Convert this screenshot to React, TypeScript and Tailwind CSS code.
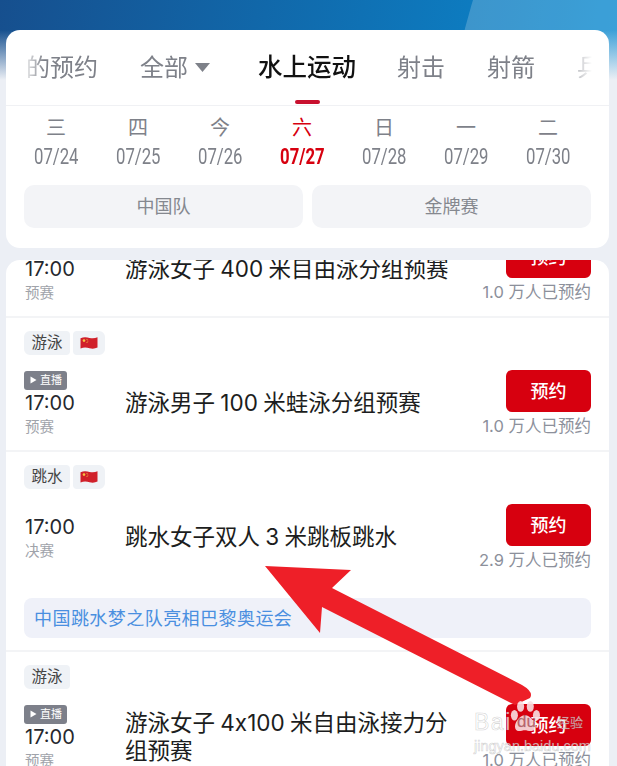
const CJK = "font-['Inter','Noto_Sans_CJK_SC',sans-serif]"

const DAYS = [
  { w: '三', d: '07/24' },
  { w: '四', d: '07/25' },
  { w: '今', d: '07/26' },
  { w: '六', d: '07/27', active: true },
  { w: '日', d: '07/28' },
  { w: '一', d: '07/29' },
  { w: '二', d: '07/30' },
]

function Flag() {
  return (
    <svg width="18" height="14" viewBox="0 0 18 14">
      <path d="M0.5 2.2C4 0.6 7 1.2 9.5 1.9C12.5 2.6 15 2.4 17.5 1.2V11.6C15 12.8 12.5 13 9.5 12.3C7 11.6 4 11 0.5 12.6Z" fill="#d0202a" />
      <circle cx="4" cy="4.6" r="1.3" fill="#f5c542" />
      <circle cx="7" cy="3.4" r="0.5" fill="#f5c542" />
      <circle cx="7.8" cy="5" r="0.5" fill="#f5c542" />
      <circle cx="7" cy="6.6" r="0.5" fill="#f5c542" />
    </svg>
  )
}

function Tags({ name, flag }: { name: string; flag?: boolean }) {
  return (
    <div className="flex gap-[3px] h-6">
      <span className="w-[46px] h-6 flex items-center justify-center rounded-l-md rounded-r-sm bg-[#eff2f6] text-[15.5px] text-[#444]">
        {name}
      </span>
      {flag && (
        <span className="w-8 h-6 flex items-center justify-center rounded-r-md rounded-l-sm bg-[#eff2f6]">
          <Flag />
        </span>
      )}
    </div>
  )
}

function LiveBadge() {
  return (
    <span className="-ml-px w-[43px] h-[19px] flex items-center gap-[3px] pl-[6px] rounded-[3px] bg-[#7d808a] text-[11px] text-white">
      <svg width="7" height="8" viewBox="0 0 7 8">
        <path d="M0.5 0.5L6.5 4L0.5 7.5Z" fill="#fff" />
      </svg>
      直播
    </span>
  )
}

interface RowProps {
  sport: string
  flag?: boolean
  live?: boolean
  stage: string
  title: string
  count: string
  children?: React.ReactNode
}

function Row({ sport, flag, live, stage, title, count, children }: RowProps) {
  return (
    <div className="shrink-0 px-[18px] pt-[13px] pb-3 border-b-2 border-[#f3f4f6]">
      <Tags name={sport} flag={flag} />
      <div className="mt-[15px] h-[68px] flex items-center">
        <div className="w-[101px] pl-px shrink-0 flex flex-col items-start">
          {live && <LiveBadge />}
          <span className="text-[20px] leading-[26px] text-[#26282e]">17:00</span>
          <span className="text-[14.5px] leading-[22px] text-[#a0a3aa]">{stage}</span>
        </div>
        <div className="flex-1 -mt-[2px] text-[22.5px] leading-[28px] [word-spacing:-1px] text-[#1c1d20] pr-2">{title}</div>
        <div className="w-[115px] shrink-0 flex flex-col items-end">
          <button className="w-[85px] h-[42px] rounded-md bg-[#d7000f] text-white text-[18px] font-medium">预约</button>
          <span className="mt-[2px] text-[16.5px] leading-[24px] text-[#8c909b] whitespace-nowrap">{count}</span>
        </div>
      </div>
      {children}
    </div>
  )
}

function Arrow() {
  return (
    <svg className="absolute left-0 top-0" width="617" height="766" viewBox="0 0 617 766">
      <path
        d="M265 566L351 570L332 588L522 685Q534 692 530 698L515 705L322 607L320 633Z"
        fill="#ee1f28"
      />
    </svg>
  )
}

function Watermark() {
  return (
    <div className="absolute left-[474px] top-[700px] w-[112px] h-[52px] text-white/70 whitespace-nowrap [-webkit-text-stroke:0.6px_rgba(120,120,120,0.35)]">
      <svg width="30" height="34" viewBox="0 0 34 38" className="absolute left-[36px] top-0">
        <g fill="#f8dfe2" fillOpacity="0.9">
          <ellipse cx="5" cy="17" rx="4" ry="6" />
          <ellipse cx="12" cy="7" rx="4" ry="6" />
          <ellipse cx="23" cy="7" rx="4" ry="6" />
          <ellipse cx="30" cy="17" rx="4" ry="6" />
          <path d="M17 17C23 17 30 26 28 32C26 37 20 34 17 34C13 34 8 37 6 32C4 26 11 17 17 17Z" />
        </g>
      </svg>
      <div className="relative flex items-center h-[36px] pt-[8px] font-['Liberation_Sans',sans-serif]">
        <span className="w-[43px] text-[23px] tracking-[1.5px]">Bai</span>
        <span className="w-10 text-[17px] text-[#b3303a]/70">du</span>
        <span className="text-[13px] font-['Noto_Sans_CJK_SC',sans-serif]">经验</span>
      </div>
      <div className="mt-[4px] text-[14.5px] leading-[13px] font-['Liberation_Sans',sans-serif]">jingyan.baidu.com</div>
    </div>
  )
}

export default function App() {
  return (
    <div className={`relative w-[617px] h-[766px] overflow-hidden flex flex-col bg-[#eceff5] ${CJK}`}>
      <div className="absolute inset-x-0 top-0 h-[82px] overflow-hidden bg-[linear-gradient(100deg,#164f8e,#0a8ad0)]">
        <div className="absolute left-[450px] -top-[350px] w-[1000px] h-[1000px] rounded-full bg-white/20" />
        <div className="absolute inset-0 bg-[linear-gradient(to_bottom,transparent_30px,#eceff5_80px)]" />
      </div>

      <div className="relative mt-[30px] ml-[6px] mr-2 h-[218px] shrink-0 rounded-[14px] bg-white overflow-hidden">
        <div className="relative h-[75px] flex items-center pl-5 mr-[17px] overflow-hidden text-[24px] text-[#7e8189] whitespace-nowrap [mask-image:linear-gradient(to_right,transparent_16px,#000_38px,#000_calc(100%-30px),transparent)]">
          <span>的预约</span>
          <span className="ml-[42px]">全部</span>
          <svg className="ml-[7px] shrink-0" width="15" height="9" viewBox="0 0 15 9">
            <path d="M0 0H15L7.5 9Z" fill="#7e8189" />
          </svg>
          <span className="ml-12 text-[24.5px] font-medium text-[#111]">水上运动</span>
          <span className="ml-[41px]">射击</span>
          <span className="ml-[42px]">射箭</span>
          <span className="ml-[42px]">乒乓球</span>
        </div>
        <div className="flex justify-center h-0">
          <span className="w-[25px] h-1 -translate-y-[5px] rounded-full bg-[#c8102e]" />
        </div>
        <div className="h-[1px] bg-[#f0f1f4]" />

        <div className="mt-[9px] pl-[9px] pr-[20px] grid grid-cols-7">
          {DAYS.map(day => (
            <div key={day.d} className={`flex flex-col items-center ${day.active ? 'text-[#d7000f]' : 'text-[#7e8189]'}`}>
              <span className="text-[20px] leading-[27px]">{day.w}</span>
              <span className={`text-[22px] leading-[29px] scale-x-[0.76] font-['Roboto',sans-serif] ${day.active ? 'font-bold' : ''}`}>{day.d}</span>
            </div>
          ))}
        </div>

        <div className="mt-[14px] px-[18px] grid grid-cols-2 gap-[9px]">
          <div className="h-[43px] rounded-[10px] bg-[#f3f4f7] flex items-center justify-center text-[18px] text-[#85888f]">中国队</div>
          <div className="h-[43px] rounded-[10px] bg-[#f3f4f7] flex items-center justify-center text-[18px] text-[#85888f]">金牌赛</div>
        </div>
      </div>

      <div className="mt-3 ml-[6px] mr-2 flex-1 min-h-0 rounded-t-[14px] bg-white overflow-hidden">
        <div className="-mt-[76px] flex flex-col">
          <Row sport="游泳" flag live stage="预赛" title="游泳女子 400 米目由泳分组预赛" count="1.0 万人已预约" />
          <Row sport="游泳" flag live stage="预赛" title="游泳男子 100 米蛙泳分组预赛" count="1.0 万人已预约" />
          <Row sport="跳水" flag stage="决赛" title="跳水女子双人 3 米跳板跳水" count="2.9 万人已预约">
            <div className="mt-[26px] h-10 flex items-center px-[10px] rounded-lg bg-[#eff1f9] text-[18px] tracking-[0.45px] text-[#4a8fe0]">
              中国跳水梦之队亮相巴黎奥运会
            </div>
          </Row>
          <Row sport="游泳" live stage="预赛" title="游泳女子 4x100 米自由泳接力分组预赛" count="1.0 万人已预约" />
        </div>
      </div>

      <Arrow />
      <Watermark />
    </div>
  )
}
